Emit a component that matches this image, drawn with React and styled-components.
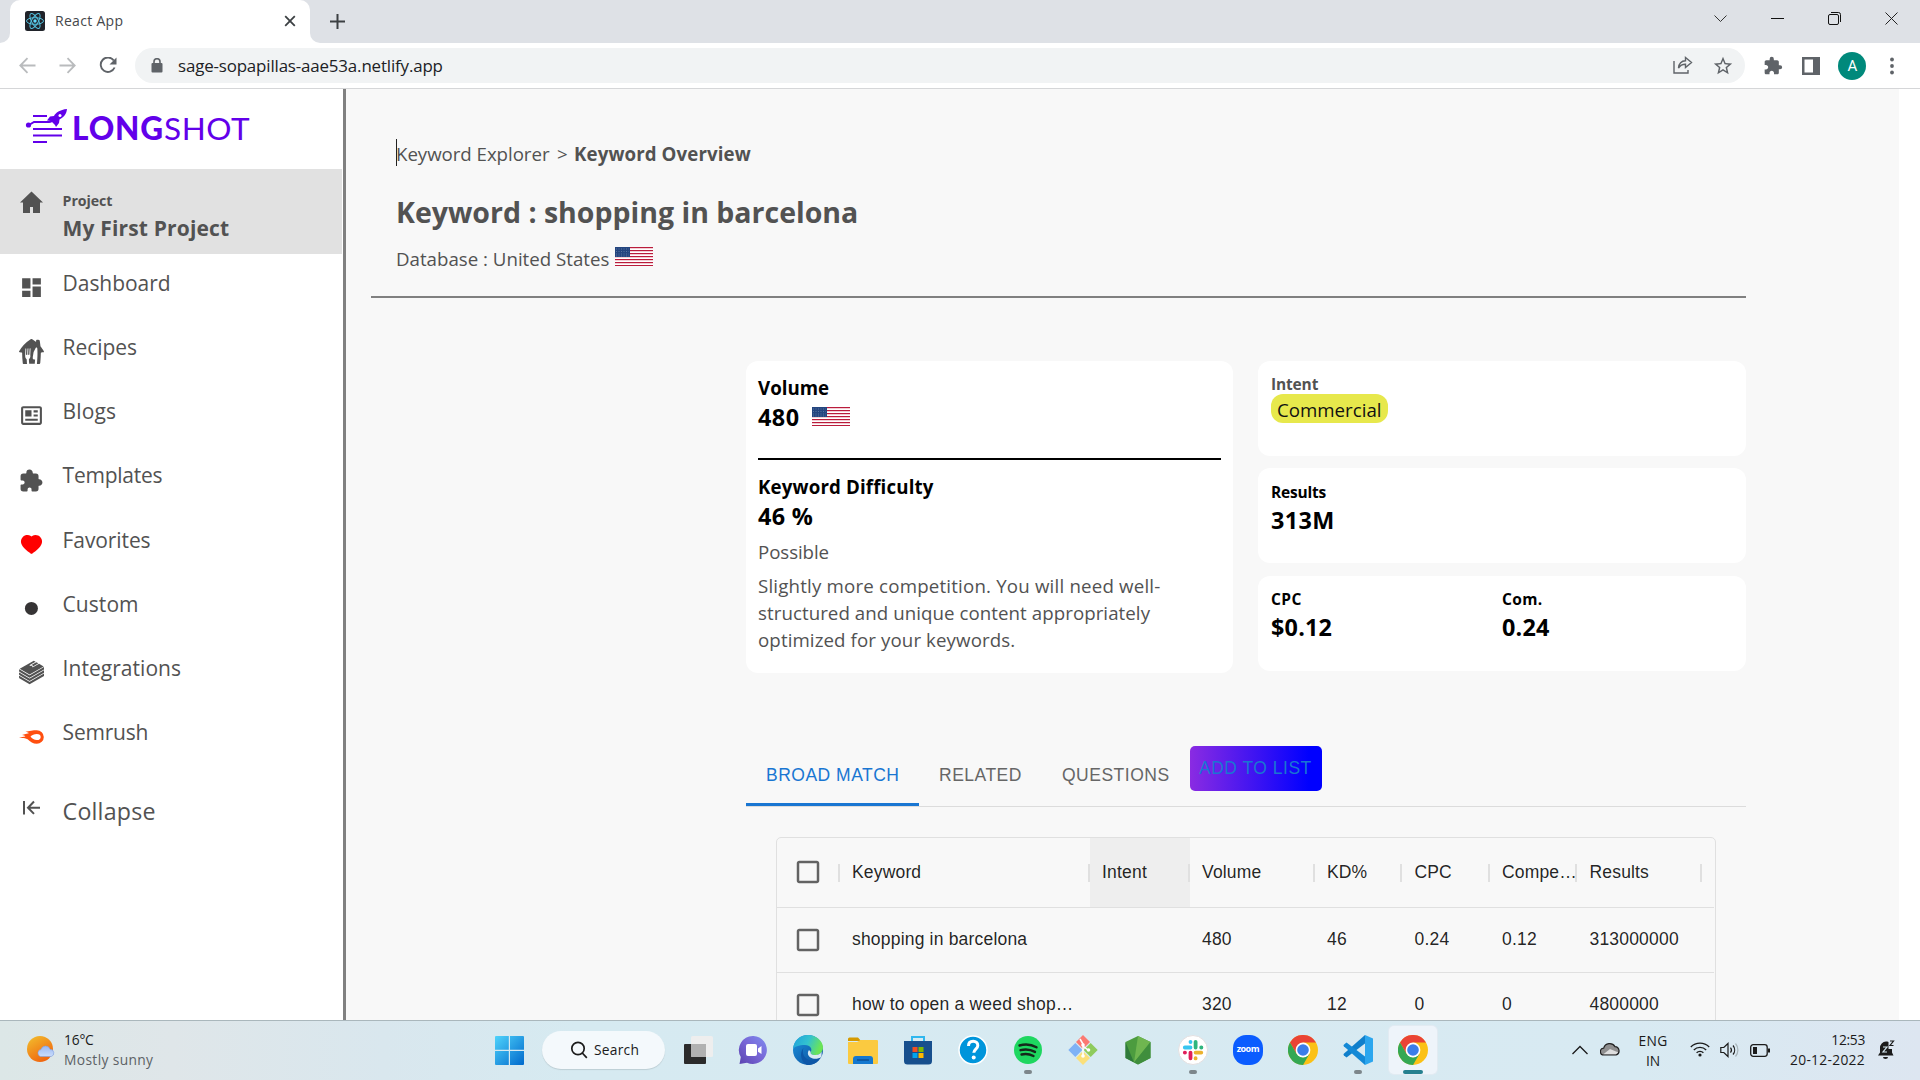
import React from 'react';
import styled, { createGlobalStyle } from 'styled-components';
import { MdDashboard, MdExtension, MdCheckBoxOutlineBlank, MdStarBorder } from 'react-icons/md';
import { BiNews } from 'react-icons/bi';
import { AiFillHeart } from 'react-icons/ai';
import { IoExtensionPuzzle } from 'react-icons/io5';
import { SiJusteat, SiBookstack } from 'react-icons/si';

const GlobalStyle = createGlobalStyle`
  * { box-sizing: border-box; }
  body { margin: 0; background: #fff; font-family: "Open Sans", "Noto Sans", sans-serif; }
  svg { display: block; flex: none; }
`;

const Text = styled.span`
  display: block;
  white-space: nowrap;
  letter-spacing: ${(p) => p.$track || 0}px;
`;

const Screen = styled.div`
  width: 1920px;
  height: 1080px;
  display: flex;
  flex-direction: column;
  overflow: hidden;
`;

/* browser frame */
const TabStrip = styled.header`
  height: 43px;
  flex: none;
  display: flex;
  background: #dee1e6;
`;
const TabLeftFoot = styled.div`
  width: 10px;
  background: #fff;
  &::after { content: ""; display: block; height: 43px; background: #dee1e6; border-bottom-right-radius: 10px; }
`;
const BrowserTab = styled.div`
  width: 300px;
  display: flex;
  align-items: center;
  padding: 0 14px 1px 15px;
  background: #fff;
  border-radius: 10px 10px 0 0;
`;
const TabTitle = styled(Text)`
  flex: 1;
  padding-left: 10px;
  font-size: 14px;
  line-height: 20px;
  color: #45484b;
`;
const TabRightFoot = styled.div`
  flex: 1;
  display: flex;
  background: #fff;
`;
const StripRest = styled.div`
  flex: 1;
  display: flex;
  align-items: center;
  background: #dee1e6;
  border-bottom-left-radius: 10px;
  padding-left: 20px;
`;
const WindowControls = styled.div`
  margin-left: auto;
  display: flex;
  gap: 44px;
  padding: 0 22px 6px 0;
  align-items: center;
`;
const Toolbar = styled.div`
  height: 46px;
  flex: none;
  display: flex;
  align-items: center;
  padding: 0 21px 0 19px;
  background: #fff;
  border-bottom: 1px solid #d5d6d8;
`;
const NavButtons = styled.div`
  display: flex;
  gap: 23px;
  width: 116px;
  flex: none;
`;
const Omnibox = styled.div`
  width: 1610px;
  flex: none;
  height: 35px;
  display: flex;
  align-items: center;
  border-radius: 18px;
  background: #f1f3f4;
  padding: 0 11px 0 16px;
`;
const Url = styled(Text)`
  flex: 1;
  padding: 0 0 0 15px;
  font-size: 16.9px;
  line-height: 24px;
  color: #202124;
`;
const OmniActions = styled.div`
  display: flex;
  gap: 19px;
`;
const ToolbarActions = styled.div`
  flex: 1;
  display: flex;
  align-items: center;
  justify-content: space-between;
  padding-left: 18px;
`;
const Avatar = styled.div`
  width: 28px;
  height: 28px;
  border-radius: 50%;
  background: #00897b;
  color: #fff;
  font: 15px/29px Roboto, sans-serif;
  text-align: center;
`;

/* page */
const Page = styled.div`
  height: 931px;
  flex: none;
  display: flex;
  overflow: hidden;
`;
const Sidebar = styled.aside`
  width: 346px;
  flex: none;
  background: #fff;
  border-right: 3px solid #808080;
  color: #525252;
`;
const Brand = styled.div`
  height: 80px;
  display: flex;
  padding: 20px 0 0 25px;
`;
const Wordmark = styled(Text)`
  font: 400 31.5px/32px Lato, sans-serif;
  color: #6200ea;
  padding: 3px 0 0 1px;
  b { font-weight: 900; letter-spacing: 0.9px; }
`;
const ProjectRow = styled.div`
  width: 342px;
  height: 85px;
  display: flex;
  background: #e1e1e1;
  padding: 20px 0 0 19px;
`;
const ProjectText = styled.div`
  padding: 1px 0 0 18.6px;
`;
const ProjectCaption = styled(Text)`
  font-size: 14.2px;
  line-height: 22px;
  font-weight: 700;
`;
const ProjectName = styled(Text)`
  font-size: 21px;
  line-height: 32px;
  font-weight: 700;
`;
const NavItem = styled.div`
  height: 64.15px;
  display: flex;
`;
const NavIcon = styled.div`
  width: 62.6px;
  flex: none;
  padding: ${(p) => p.$top || 21}px 0 0 19px;
  color: ${(p) => p.$color || '#525252'};
`;
const NavLabel = styled(Text)`
  padding-top: 14px;
  font-size: 21px;
  line-height: 30px;
`;
const CollapseItem = styled.div`
  display: flex;
  padding-top: 14px;
`;
const CollapseLabel = styled(Text)`
  padding-top: 14px;
  font-size: 23.2px;
  line-height: 32px;
`;

const Main = styled.main`
  width: 1553px;
  flex: none;
  background: #f8f8f8;
  padding: 51px 0 0 25px;
  color: #525252;
`;
const PageHeader = styled.div`
  width: 1375px;
  height: 158px;
  border-bottom: 2px solid #808080;
  padding-left: 25px;
`;
const Crumbs = styled.div`
  display: flex;
  position: relative;
`;
const Caret = styled.i`
  position: absolute;
  left: 0;
  top: -1px;
  width: 1px;
  height: 27px;
  background: #222;
`;
const Crumb = styled(Text)`
  font-size: 18.7px;
  line-height: 27px;
  font-weight: ${(p) => (p.$current ? 700 : 400)};
  width: ${(p) => p.$width}px;
`;
const Title = styled(Text)`
  margin-top: 25px;
  font-size: 28.5px;
  line-height: 40px;
  font-weight: 700;
`;
const DatabaseLine = styled.div`
  display: flex;
  margin-top: 13px;
`;
const DatabaseText = styled(Text)`
  width: 219px;
  font-size: 18.7px;
  line-height: 27px;
`;
const FlagBox = styled.div`
  padding-top: ${(p) => p.$top}px;
`;

const Body = styled.div`
  margin: 63px 0 0 375px;
  width: 1000px;
`;
const Cards = styled.div`
  display: grid;
  grid-template-columns: 487px 488px;
  column-gap: 25px;
  height: 385px;
  align-items: start;
`;
const DifficultyCard = styled.section`
  height: 312px;
  background: #fff;
  border-radius: 12px;
  padding: 13px 12px 0;
`;
const CardTitle = styled(Text)`
  font-size: 18.7px;
  line-height: 27px;
  font-weight: 700;
  color: #000;
`;
const Figure = styled(Text)`
  font-size: 23.4px;
  line-height: 32px;
  font-weight: 700;
  color: #000;
`;
const VolumeLine = styled.div`
  display: flex;
  height: 57px;
  gap: 12px;
`;
const Rule = styled.div`
  height: 2px;
  background: #000;
  margin-bottom: 13px;
`;
const Note = styled(Text)`
  font-size: 18.7px;
  line-height: 27px;
  margin-top: ${(p) => p.$top || 0}px;
`;
const SideCards = styled.div`
  display: grid;
  grid-template-rows: 95px 95px 95px;
  row-gap: 12.4px;
`;
const SmallCard = styled.section`
  background: #fff;
  border-radius: 12px;
  padding: ${(p) => p.$top}px 0 0 13px;
  display: grid;
  grid-template-columns: 231px 1fr;
`;
const SmallTitle = styled(Text)`
  font-size: 15.5px;
  line-height: ${(p) => (p.$muted ? 18 : 22)}px;
  padding-bottom: 1px;
  font-weight: 700;
  color: ${(p) => (p.$muted ? '#525252' : '#000')};
`;
const Pill = styled.div`
  width: 117px;
  height: 29px;
  border-radius: 12px;
  background: #e7e84c;
  padding-left: 6px;
`;
const PillText = styled(Text)`
  font-size: 18.7px;
  line-height: 31px;
  color: #111;
`;

const Tabs = styled.div`
  display: flex;
  height: 61px;
  border-bottom: 1px solid #dcdcdc;
  font-family: "Liberation Sans", Arial, sans-serif;
`;
const Tab = styled.div`
  width: ${(p) => p.$width}px;
  height: 60px;
  padding: 0 20px;
  color: ${(p) => (p.$active ? '#1976d2' : '#666')};
  border-bottom: ${(p) => (p.$active ? '3px solid #1976d2' : '0')};
`;
const TabLabel = styled(Text)`
  font-size: 17.5px;
  letter-spacing: 0.5px;
  line-height: ${(p) => p.$lh || 58}px;
`;
const AddButton = styled.div`
  width: 132px;
  height: 45px;
  border-radius: 5px;
  background: linear-gradient(to right, blueviolet, blue 90%);
  color: #1976d2;
  padding-left: 9px;
`;

const Table = styled.div`
  margin: 30px 0 0 30px;
  width: 940px;
  height: 240px;
  border: 1px solid #e0e0e0;
  border-radius: 5px;
  font: 17.5px/24px "Liberation Sans", Arial, sans-serif;
  color: rgba(0, 0, 0, 0.87);
`;
const Row = styled.div`
  display: grid;
  grid-template-columns: 62.5px 250px 100px 125px 87.5px 87.5px 87.5px 125px;
  width: 937px;
  height: ${(p) => (p.$head ? 70 : 65)}px;
  border-bottom: 1px solid #e0e0e0;
`;
const Cell = styled.div`
  display: flex;
  align-items: center;
  min-width: 0;
  padding: ${(p) => (p.$check ? '0 0 0 16px' : '0 0 0 12.5px')};
  background: ${(p) => (p.$shade ? '#eeeeee' : 'none')};
  color: ${(p) => (p.$check ? 'rgba(0,0,0,0.6)' : 'inherit')};
  svg { margin-bottom: ${(p) => (p.$head ? 2 : 0)}px; }
  &::after {
    content: "";
    display: ${(p) => (p.$head ? 'block' : 'none')};
    width: 2px;
    height: 18px;
    margin-left: auto;
    flex: none;
    background: #e0e0e0;
  }
`;
const CellText = styled(Text)`
  letter-spacing: 0.19px;
  padding-bottom: 2px;
`;
const HeadText = styled(CellText)`
  width: 0;
  flex: 1;
  overflow: visible;
  letter-spacing: ${(p) => p.$track}px;
`;

/* taskbar */
const Taskbar = styled.footer`
  height: 60px;
  flex: none;
  display: flex;
  border-top: 1px solid #aab7bc;
  background: linear-gradient(to right, #dce7e7, #dfe6e9 9%, #d9e7ee 20%, #d6eaf1 30%, #d8eaf2 85%, #dde6f1);
  color: #1b1b1b;
`;
const Weather = styled.div`
  width: 495px;
  display: flex;
  padding: 9px 0 0 27px;
  gap: 9px;
  svg { margin-top: 4px; }
`;
const TaskText = styled(Text)`
  font-size: 13.8px;
  line-height: 20px;
  color: ${(p) => p.$color || '#1b1b1b'};
`;
const StartButton = styled.div`
  padding-top: 15px;
  width: 47px;
`;
const SearchBox = styled.div`
  width: 123px;
  height: 38px;
  margin: 10px 5px 0 0;
  border-radius: 19px;
  background: #f4f9fc;
  box-shadow: 0 1px 1px rgba(0, 0, 0, 0.12);
  display: flex;
  align-items: center;
  padding-left: 28px;
  gap: 6px;
`;
const AppSlot = styled.div`
  width: 48px;
  height: 48px;
  margin: 5px 3.53px 0;
  border-radius: 5px;
  display: flex;
  flex-direction: column;
  align-items: center;
  padding-top: 9px;
  background: ${(p) => (p.$active ? '#eef4fa' : 'none')};
  box-shadow: ${(p) => (p.$active ? '0 0 0 1px #e2ebf2' : 'none')};
  &::after {
    content: "";
    display: ${(p) => (p.$dot ? 'block' : 'none')};
    width: ${(p) => p.$dot}px;
    height: 4px;
    border-radius: 2px;
    margin-top: 5px;
    background: ${(p) => (p.$active ? '#26808f' : '#7d868b')};
  }
`;
const Tray = styled.div`
  margin-left: auto;
  padding-right: 25px;
  display: flex;
`;
const TrayIcon = styled.div`
  width: ${(p) => p.$width}px;
  padding: ${(p) => p.$top}px 0 0 ${(p) => p.$left || 0}px;
`;
const TrayStack = styled.div`
  width: ${(p) => p.$width}px;
  padding: ${(p) => p.$top}px ${(p) => p.$right || 0}px 0 0;
  display: flex;
  flex-direction: column;
  align-items: ${(p) => p.$align};
`;

const Flag = () => (
  <svg width="38" height="19" viewBox="0 0 38 19">
    <rect width="38" height="19" fill="#fff" />
    {[0, 3, 6, 9, 12, 15, 18].map((y) => (
      <rect key={y} y={y} width="38" height="1" fill="#b91c3c" />
    ))}
    {[1, 4, 7, 10, 13, 16].map((y) => (
      <rect key={y} y={y} width="38" height="1" fill="#f3ccd3" />
    ))}
    <rect width="15" height="10" fill="#24457f" />
    <path d="M1 2h13M1 4.500h13M1 7h13M1 9h13" stroke="#6f8ab0" strokeWidth=".7" strokeDasharray="1 1.500" />
  </svg>
);

const ReactLogo = () => (
  <svg width="20" height="20" viewBox="0 0 20 20">
    <rect width="20" height="20" rx="2.500" fill="#20232a" />
    <g fill="none" stroke="#53c1de" strokeWidth="1">
      <ellipse cx="10" cy="10" rx="8.500" ry="3.300" />
      <ellipse cx="10" cy="10" rx="8.500" ry="3.300" transform="rotate(60 10 10)" />
      <ellipse cx="10" cy="10" rx="8.500" ry="3.300" transform="rotate(120 10 10)" />
    </g>
    <circle cx="10" cy="10" r="1.700" fill="#61dafb" />
  </svg>
);

const Rocket = () => (
  <svg width="46" height="36" viewBox="0 0 46 36" fill="none" stroke="#6200ea" strokeWidth="2">
    <path d="M8 7h14M8 20h29M8 26.500h29M8 33h14M4 16l5-3h15c2.500 0 4-1.500 5.500-3.500" />
    <circle cx="3.500" cy="16" r="2.600" fill="#6200ea" stroke="none" />
    <path d="M42 0c-7 .5-11.500 4-13 7l-4 .5-3 4 4 .5 4 4 1 2 3-4 .5-3.500C37.500 9 41.500 6 42 0z" fill="#6200ea" stroke="none" />
    <circle cx="35" cy="6.500" r="1.500" fill="#fff" stroke="none" />
  </svg>
);

const HomeIcon = () => (
  <svg width="25" height="25" viewBox="0 0 25 25">
    <path d="M12.500 2.500L24 13.500h-3V24h-7v-6h-3v6H4V13.500H1z" fill="#525252" />
  </svg>
);
const DotIcon = () => (
  <svg width="25" height="25" viewBox="0 0 25 25">
    <circle cx="12.400" cy="12.400" r="6.500" fill="#363435" />
  </svg>
);
const CometIcon = () => (
  <svg width="25" height="25" viewBox="0 0 25 25">
    <path
      d="M17.800 6.200c-3.600 0-7.600.7-11.400 1.500 2 .3 3.200.9 3.400 1.600-2 .7-4.300 1-6.800 1.700 1.800.2 3 .7 3.400 1.400C4.500 12.700 2.300 12.700 0 14.100c3.400-.4 6.200-.2 8.600 1.200 2.700 2.500 5.500 4.500 9.200 4.500a7 6.800 0 0 0 0-13.600zM11.500 12.600c1.500-1.700 3.700-2.700 6.300-2.700a3.900 3.100 0 0 1 0 6.200c-2.500 0-4.800-1.200-6.300-3.500z"
      fill="#ff4f10"
      fillRule="evenodd"
    />
  </svg>
);
const CollapseIcon = () => (
  <svg width="25" height="25" viewBox="0 0 25 25" fill="none" stroke="#525252" strokeWidth="2">
    <path d="M5 5v13.500M21 11.700H10M15 5.500l-6 6.200 6 6.200" />
  </svg>
);

const SunCloud = () => (
  <svg width="28" height="28" viewBox="0 0 28 28">
    <defs>
      <linearGradient id="sun" x1="0" y1="0" x2=".6" y2="1">
        <stop offset="0" stopColor="#f2c12e" />
        <stop offset="1" stopColor="#f0650f" />
      </linearGradient>
      <linearGradient id="cloud" x1="0" y1="0" x2="0" y2="1">
        <stop offset="0" stopColor="#9bb8f2" />
        <stop offset="1" stopColor="#c9dcfb" />
      </linearGradient>
    </defs>
    <circle cx="13" cy="15" r="13" fill="url(#sun)" />
    <path d="M13.500 22.500a3.600 3.600 0 0 1 .5-7 4.700 4.700 0 0 1 9-.2 3.700 3.700 0 0 1 1.300 7.200z" fill="url(#cloud)" stroke="#7f9fe0" strokeWidth=".6" />
  </svg>
);
const WindowsLogo = () => (
  <svg width="29" height="29" viewBox="0 0 29 29">
    <defs>
      <linearGradient id="win" x1="0" y1="0" x2="1" y2="1">
        <stop offset="0" stopColor="#4fd3fb" />
        <stop offset="1" stopColor="#0069cc" />
      </linearGradient>
    </defs>
    <path d="M0 1a1 1 0 0 1 1-1h12.800v13.800H0zM15 0h13a1 1 0 0 1 1 1v12.800H15zM0 15h13.800v14H1a1 1 0 0 1-1-1zM15 15h14v13a1 1 0 0 1-1 1H15z" fill="url(#win)" />
  </svg>
);
const SearchGlass = () => (
  <svg width="18" height="18" viewBox="0 0 18 18" fill="none" stroke="#1b1b1b" strokeWidth="1.700">
    <circle cx="8" cy="7.500" r="6.200" />
    <path d="M12.300 12l4.500 4.800" />
  </svg>
);

const TaskView = () => (
  <svg width="30" height="30" viewBox="0 0 30 30">
    <rect x="1" y="9" width="22" height="20" rx="1" fill="#2b2b2b" />
    <rect x="8" y="1" width="22" height="21" rx="1.500" fill="#eeeeee" />
    <path d="M8 9h15v13H9.500a1.500 1.500 0 0 1-1.500-1.500z" fill="#b1b1b1" />
  </svg>
);
const Chat = () => (
  <svg width="30" height="30" viewBox="0 0 30 30">
    <defs>
      <linearGradient id="chat" x1="0" y1="1" x2="1" y2="0">
        <stop offset="0" stopColor="#5b43b0" />
        <stop offset=".5" stopColor="#7866d6" />
        <stop offset="1" stopColor="#7f8df0" />
      </linearGradient>
    </defs>
    <path d="M15.500 1A14 14 0 1 1 9 27.700L1.500 29l1.300-7A14 14 0 0 1 15.500 1z" fill="url(#chat)" />
    <rect x="8" y="9" width="11" height="12" rx="2" fill="#fff" />
    <path d="M20 13.500l3.500-2.500v8L20 16.700z" fill="#fff" />
  </svg>
);
const Edge = () => (
  <svg width="30" height="30" viewBox="0 0 30 30">
    <defs>
      <linearGradient id="edgeA" x1="0" y1="0" x2="1" y2=".3">
        <stop offset="0" stopColor="#1ea0dc" />
        <stop offset=".55" stopColor="#33c2cf" />
        <stop offset="1" stopColor="#6be556" />
      </linearGradient>
      <linearGradient id="edgeB" x1="0" y1="0" x2="1" y2="1">
        <stop offset="0" stopColor="#1b93dd" />
        <stop offset="1" stopColor="#0c4a99" />
      </linearGradient>
    </defs>
    <circle cx="15" cy="15" r="15" fill="url(#edgeB)" />
    <path d="M0 14C1 5 7 0 15 0s15 6 15 12.500c0 5-4 7.500-7.500 7.500-4 0-5.500-1.500-4.700-3 1.700-3-.3-7-5.800-7C6 10 1 12 0 14z" fill="url(#edgeA)" />
    <path d="M17.800 17c-.8 1.500.7 3 4.700 3 2.500 0 4.800-1 6.200-3.200L28.500 22c-3 2-8 2.500-11 .5-3-2-3.300-5-1.500-7.500z" fill="#d9eaf2" />
    <path d="M10.500 13C8 20 13 28 26 25c-3 4-8 5.500-12 4.900C8 27 6 18 10.500 13z" fill="#0d57a7" />
  </svg>
);
const Folder = () => (
  <svg width="30" height="30" viewBox="0 0 30 30">
    <path d="M0 4a1.500 1.500 0 0 1 1.500-1.500H10l3 3.500H0z" fill="#d59a00" />
    <path d="M0 7h9l3.500-2H29a1 1 0 0 1 1 1v22a1 1 0 0 1-1 1H1a1 1 0 0 1-1-1z" fill="#fbca40" />
    <path d="M5 29v-5a3 3 0 0 1 3-3h14a3 3 0 0 1 3 3v5z" fill="#1478cf" />
    <path d="M9 25h12" stroke="#0b4f94" strokeWidth="1.500" />
  </svg>
);
const Store = () => (
  <svg width="30" height="30" viewBox="0 0 30 30">
    <path d="M9 6V2h12v4" fill="none" stroke="#2fb7ee" strokeWidth="2" />
    <path d="M1 6h28v20a3.500 3.500 0 0 1-3.500 3.500h-21A3.500 3.500 0 0 1 1 26z" fill="#174f8d" />
    <path d="M9.500 12h5v5h-5z" fill="#f25022" />
    <path d="M15.500 12h5v5h-5z" fill="#7fba00" />
    <path d="M9.500 18h5v5h-5z" fill="#00a4ef" />
    <path d="M15.500 18h5v5h-5z" fill="#ffb900" />
  </svg>
);
const Help = () => (
  <svg width="30" height="30" viewBox="0 0 30 30">
    <circle cx="15" cy="15" r="14" fill="#0095db" stroke="#fff" strokeWidth="1.500" />
    <path d="M10.500 11c0-3 2-4.700 4.700-4.700s4.600 1.700 4.600 4.200c0 3.500-4 3.700-4 7.300" fill="none" stroke="#fff" strokeWidth="3" />
    <circle cx="15.700" cy="22.500" r="2" fill="#fff" />
  </svg>
);
const Spotify = () => (
  <svg width="30" height="30" viewBox="0 0 30 30">
    <circle cx="15" cy="15" r="14" fill="#1ed760" />
    <path d="M6.500 10.500c6-1.700 12-1 17 1.800M7.500 15.200c5-1.400 10-.8 14.500 1.700M8.500 19.500c4-1 8-.6 12 1.500" fill="none" stroke="#15281b" strokeWidth="2.400" strokeLinecap="round" />
  </svg>
);
const GitIcon = () => (
  <svg width="30" height="30" viewBox="0 0 30 30">
    <path d="M15 0l7 7-7 7-7-7z" fill="#fb7a72" />
    <path d="M7.300 8l7 7-7 7-7-7z" fill="#7fb2f5" />
    <path d="M22.700 8l7 7-7 7-7-7z" fill="#8ecb5c" />
    <path d="M15 16l7 7-7 7-7-7z" fill="#fbe07a" />
    <path d="M12 4l3 5v12M15 11l5 4" stroke="#fff" strokeWidth="1.500" fill="none" />
    <circle cx="15" cy="10" r="1.800" fill="#fff" /><circle cx="20.500" cy="15" r="1.800" fill="#fff" /><circle cx="15" cy="21" r="1.800" fill="#fff" />
  </svg>
);
const Hexagon = () => (
  <svg width="30" height="30" viewBox="0 0 30 30">
    <path d="M15 1l12.500 6v16L15 29.500 2.500 23V7z" fill="#4c9c3f" />
    <path d="M15 1l12.500 6L11 27.500z" fill="#6fb650" />
    <path d="M2.500 7L11 27.500 2.500 23z" fill="#2f7a3a" />
    <path d="M27.500 7v16L15 29.500l-4-2z" fill="#3f8e3d" />
  </svg>
);
const Slack = () => (
  <svg width="30" height="30" viewBox="0 0 30 30">
    <circle cx="15" cy="15" r="14.500" fill="#fff" stroke="#e3dfe0" />
    <g strokeWidth="3.800" strokeLinecap="round">
      <path d="M12.500 6.800v.2M6.800 12.500h5.700" stroke="#36c5f0" />
      <path d="M17.600 6.800v5.700M23.200 12.500h.2" stroke="#2eb67d" />
      <path d="M17.600 23.200v.2M17.600 17.600h5.700" stroke="#ecb22e" />
      <path d="M12.500 17.600v5.700M6.800 17.600h.2" stroke="#e01e5a" />
    </g>
  </svg>
);
const ZoomLabel = styled.div`
  width: 30px;
  height: 30px;
  flex: none;
  border-radius: 13px;
  background: #0b5cff;
  color: #fff;
  font: 700 9px/28px "Open Sans", sans-serif;
  letter-spacing: -0.5px;
  text-align: center;
`;
const Chrome = () => (
  <svg width="30" height="30" viewBox="0 0 30 30">
    <circle cx="15" cy="15" r="15" fill="#fbc116" />
    <path d="M2 7.500A15 15 0 0 1 28 7.500H15L8.500 18.750z" fill="#ea4335" />
    <path d="M2 7.500A15 15 0 0 0 15 30l6.500-11.250L15 22.500l-6.500-3.750z" fill="#34a853" />
    <circle cx="15" cy="15" r="7.400" fill="#fff" />
    <circle cx="15" cy="15" r="5.800" fill="#3b7de9" />
  </svg>
);
const VsCode = () => (
  <svg width="30" height="30" viewBox="0 0 30 30">
    <path d="M22 8.500L3.500 22.500.8 20.300c-.5-.5-.5-1 0-1.500L22 0z" fill="#0f7fcb" />
    <path d="M22 21.500L3.500 7.500.8 9.700c-.5.500-.5 1 0 1.500L22 30z" fill="#1489d6" />
    <path d="M22 0l8 3.500v23L22 30z" fill="#2ba6ee" />
  </svg>
);

const navItems = [
  { label: 'Dashboard', icon: <MdDashboard size={25} />, track: -0.05 },
  { label: 'Recipes', icon: <SiJusteat size={25} />, track: -0.05 },
  { label: 'Blogs', icon: <BiNews size={25} />, track: 0.1 },
  { label: 'Templates', icon: <IoExtensionPuzzle size={25} />, top: 22, track: -0.25 },
  { label: 'Favorites', icon: <AiFillHeart size={25} />, color: '#ff0000', track: -0.1 },
  { label: 'Custom', icon: <DotIcon />, track: 0.05 },
  { label: 'Integrations', icon: <SiBookstack size={25} />, track: 0.04 },
  { label: 'Semrush', icon: <CometIcon />, track: -0.2 },
];

const columns = [
  ['Keyword', 0.17], ['Intent', 0.2], ['Volume', 0.17], ['KD%', 0.1],
  ['CPC', 0.15], ['Compe…', 0.15], ['Results', 0.17],
];
const rows = [
  ['shopping in barcelona', '', '480', '46', '0.24', '0.12', '313000000'],
  ['how to open a weed shop…', '', '320', '12', '0', '0', '4800000'],
];

const apps = [
  { icon: <TaskView /> }, { icon: <Chat /> }, { icon: <Edge /> }, { icon: <Folder /> },
  { icon: <Store /> }, { icon: <Help /> }, { icon: <Spotify />, dot: 8 }, { icon: <GitIcon /> },
  { icon: <Hexagon /> }, { icon: <Slack />, dot: 8 }, { icon: <ZoomLabel>zoom</ZoomLabel> }, { icon: <Chrome /> },
  { icon: <VsCode />, dot: 8 }, { icon: <Chrome />, dot: 20, active: true },
];

export default function App() {
  return (
    <Screen>
      <GlobalStyle />
      <TabStrip>
        <TabLeftFoot />
        <BrowserTab>
          <ReactLogo />
          <TabTitle $track={0.3}>React App</TabTitle>
          <svg width="12" height="12" viewBox="0 0 12 12" stroke="#3c4043" strokeWidth="1.800"><path d="M1.200 1.200l9.600 9.600M10.800 1.200L1.200 10.800" /></svg>
        </BrowserTab>
        <TabRightFoot>
          <StripRest>
            <svg width="15" height="15" viewBox="0 0 15 15" stroke="#3c4043" strokeWidth="2"><path d="M7.500 0v15M0 7.500h15" /></svg>
            <WindowControls>
              <svg width="13" height="13" viewBox="0 0 13 13" fill="none" stroke="#333"><path d="M.5 3.500l6 6 6-6" /></svg>
              <svg width="13" height="13" viewBox="0 0 13 13" stroke="#111"><path d="M0 6.500h13" /></svg>
              <svg width="13" height="13" viewBox="0 0 13 13" fill="none" stroke="#111"><rect x=".5" y="2.500" width="10" height="10" rx="1.500" /><path d="M3 .5h7.500a2 2 0 0 1 2 2V10" /></svg>
              <svg width="13" height="13" viewBox="0 0 13 13" stroke="#222"><path d="M.5.500l12 12M12.500.500l-12 12" /></svg>
            </WindowControls>
          </StripRest>
        </TabRightFoot>
      </TabStrip>
      <Toolbar>
        <NavButtons>
          <svg width="17" height="17" viewBox="0 0 17 17" fill="none" stroke="#b9bbbd" strokeWidth="1.800"><path d="M16.500 8.500H1.500M8.500 1.200L1.300 8.500l7.200 7.300" /></svg>
          <svg width="17" height="17" viewBox="0 0 17 17" fill="none" stroke="#b9bbbd" strokeWidth="1.800"><path d="M.5 8.500h15M8.500 1.200l7.200 7.300-7.200 7.300" /></svg>
          <svg width="18" height="17" viewBox="0 0 18 17" fill="none" stroke="#5f6368" strokeWidth="1.900"><path d="M14.800 3.500A7.200 7.200 0 1 0 15.600 10.500" /><path d="M17.500.5v7h-7z" fill="#5f6368" stroke="none" /></svg>
        </NavButtons>
        <Omnibox>
          <svg width="12" height="15" viewBox="0 0 12 15"><rect x=".5" y="5" width="11" height="9.500" rx="1" fill="#5f6368" /><path d="M3 6V3.700a3 3 0 0 1 6 0V6" fill="none" stroke="#5f6368" strokeWidth="1.600" /></svg>
          <Url $track={-0.15}>sage-sopapillas-aae53a.netlify.app</Url>
          <OmniActions>
            <svg width="20" height="20" viewBox="0 0 20 20" fill="none" stroke="#5f6368" strokeWidth="1.400"><path d="M1 6v12h14v-3" /><path d="M5.500 13c.5-4.500 3-7 7-7.200V2.500l6 5-6 5V9.300c-3-.1-5.300 1.200-7 3.700z" /></svg>
            <MdStarBorder size={22} color="#5f6368" />
          </OmniActions>
        </Omnibox>
        <ToolbarActions>
          <MdExtension size={20} color="#5f6368" />
          <svg width="18" height="18" viewBox="0 0 18 18"><path d="M0 0h18v18H0zM2.500 2.500v13H11v-13z" fill="#5f6368" fillRule="evenodd" /></svg>
          <Avatar>A</Avatar>
          <svg width="14" height="18" viewBox="0 0 14 18" fill="#5f6368"><circle cx="7" cy="2.500" r="1.900" /><circle cx="7" cy="9" r="1.900" /><circle cx="7" cy="15.500" r="1.900" /></svg>
        </ToolbarActions>
      </Toolbar>

      <Page>
        <Sidebar>
          <Brand>
            <Rocket />
            <Wordmark $track={0.55}><b>LONG</b>SHOT</Wordmark>
          </Brand>
          <ProjectRow>
            <HomeIcon />
            <ProjectText>
              <ProjectCaption $track={-0.1}>Project</ProjectCaption>
              <ProjectName $track={0.16}>My First Project</ProjectName>
            </ProjectText>
          </ProjectRow>
          {navItems.map((n) => (
            <NavItem key={n.label}>
              <NavIcon $color={n.color} $top={n.top}>{n.icon}</NavIcon>
              <NavLabel $track={n.track}>{n.label}</NavLabel>
            </NavItem>
          ))}
          <CollapseItem>
            <NavIcon $top={15}><CollapseIcon /></NavIcon>
            <CollapseLabel $track={0.2}>Collapse</CollapseLabel>
          </CollapseItem>
        </Sidebar>

        <Main>
          <PageHeader>
            <Crumbs>
              <Caret />
              <Crumb $width={161} $track={-0.05}>Keyword Explorer</Crumb>
              <Crumb $width={17}>&gt;</Crumb>
              <Crumb $current $track={0.1}>Keyword Overview</Crumb>
            </Crumbs>
            <Title>Keyword : shopping in barcelona</Title>
            <DatabaseLine>
              <DatabaseText>Database : United States</DatabaseText>
              <FlagBox $top={2}><Flag /></FlagBox>
            </DatabaseLine>
          </PageHeader>

          <Body>
            <Cards>
              <DifficultyCard>
                <CardTitle>Volume</CardTitle>
                <VolumeLine>
                  <Figure $track={0.5}>480</Figure>
                  <FlagBox $top={6}><Flag /></FlagBox>
                </VolumeLine>
                <Rule />
                <CardTitle $track={0.15}>Keyword Difficulty</CardTitle>
                <Figure $track={0.3}>46 %</Figure>
                <Note $top={6} $track={-0.08}>Possible</Note>
                <Note $top={7} $track={0.19}>Slightly more competition. You will need well-</Note>
                <Note $track={0.06}>structured and unique content appropriately</Note>
                <Note $track={0.1}>optimized for your keywords.</Note>
              </DifficultyCard>
              <SideCards>
                <SmallCard $top={14}>
                  <div>
                    <SmallTitle $muted $track={-0.15}>Intent</SmallTitle>
                    <Pill><PillText>Commercial</PillText></Pill>
                  </div>
                </SmallCard>
                <SmallCard $top={13}>
                  <div>
                    <SmallTitle $track={-0.2}>Results</SmallTitle>
                    <Figure $track={0.4}>313M</Figure>
                  </div>
                </SmallCard>
                <SmallCard $top={12}>
                  <div>
                    <SmallTitle $track={0.45}>CPC</SmallTitle>
                    <Figure $track={0.2}>$0.12</Figure>
                  </div>
                  <div>
                    <SmallTitle $track={0.35}>Com.</SmallTitle>
                    <Figure $track={0.2}>0.24</Figure>
                  </div>
                </SmallCard>
              </SideCards>
            </Cards>

            <Tabs>
              <Tab $active $width={173}><TabLabel>BROAD MATCH</TabLabel></Tab>
              <Tab $width={123}><TabLabel>RELATED</TabLabel></Tab>
              <Tab $width={148}><TabLabel>QUESTIONS</TabLabel></Tab>
              <AddButton><TabLabel $lh={45}>ADD TO LIST</TabLabel></AddButton>
            </Tabs>

            <Table>
              <Row $head>
                <Cell $head $check><MdCheckBoxOutlineBlank size={30} /></Cell>
                {columns.map(([name, track]) => (
                  <Cell key={name} $head $shade={name === 'Intent'}><HeadText $track={track}>{name}</HeadText></Cell>
                ))}
              </Row>
              {rows.map((r) => (
                <Row key={r[0]}>
                  <Cell $check><MdCheckBoxOutlineBlank size={30} /></Cell>
                  {r.map((v, i) => (
                    <Cell key={i}><CellText>{v}</CellText></Cell>
                  ))}
                </Row>
              ))}
            </Table>
          </Body>
        </Main>
      </Page>

      <Taskbar>
        <Weather>
          <SunCloud />
          <div>
            <TaskText $track={-0.2}>16°C</TaskText>
            <TaskText $color="#5c6265" $track={0.36}>Mostly sunny</TaskText>
          </div>
        </Weather>
        <StartButton><WindowsLogo /></StartButton>
        <SearchBox><SearchGlass /><TaskText $track={0.25}>Search</TaskText></SearchBox>
        {apps.map((a, i) => (
          <AppSlot key={i} $dot={a.dot} $active={a.active}>{a.icon}</AppSlot>
        ))}
        <Tray>
          <TrayIcon $width={28} $top={24}>
            <svg width="16" height="10" viewBox="0 0 16 10" fill="none" stroke="#1b1b1b" strokeWidth="1.300"><path d="M.5 9L8 1.500 15.500 9" /></svg>
          </TrayIcon>
          <TrayIcon $width={33} $top={20}>
            <svg width="20" height="15" viewBox="0 0 20 15"><path d="M4 14a3.400 3.400 0 0 1-.3-6.800A6.200 6.200 0 0 1 15 5.600 4.300 4.300 0 0 1 16 14z" fill="#8f8f8f" /><path d="M3 13.500l7-5.500 8.500 3.500-2.500 2z" fill="#dedede" /><path d="M4 14a3.400 3.400 0 0 1-.3-6.800A6.200 6.200 0 0 1 15 5.600 4.300 4.300 0 0 1 16 14z" fill="none" stroke="#222" strokeWidth="1.200" /></svg>
          </TrayIcon>
          <TrayStack $width={57} $top={10} $right={17} $align="center">
            <TaskText $track={0.3}>ENG</TaskText>
            <TaskText>IN</TaskText>
          </TrayStack>
          <TrayIcon $width={30} $top={20}>
            <svg width="20" height="16" viewBox="0 0 20 16" fill="none" stroke="#1b1b1b" strokeWidth="1.300"><path d="M.8 6a13 13 0 0 1 18.400 0M3.800 9a8.800 8.800 0 0 1 12.400 0M6.600 11.700a4.800 4.800 0 0 1 6.800 0" /><circle cx="10" cy="14" r="1.600" fill="#1b1b1b" stroke="none" /></svg>
          </TrayIcon>
          <TrayIcon $width={30} $top={21}>
            <svg width="20" height="16" viewBox="0 0 20 16" fill="none" stroke="#1b1b1b" strokeWidth="1.200"><path d="M.8 5.500h3L8 1.500v13l-4.200-4h-3z" /><path d="M10.500 5.500a4 4 0 0 1 0 5M13 3.500a7 7 0 0 1 0 9" /><path d="M15.500 1.500a10 10 0 0 1 0 13" stroke="#a9b5ba" /></svg>
          </TrayIcon>
          <TrayIcon $width={40} $top={23}>
            <svg width="20" height="13" viewBox="0 0 20 13"><rect x=".7" y=".7" width="16.500" height="11.600" rx="2.500" fill="none" stroke="#1b1b1b" strokeWidth="1.300" /><rect x="3" y="3" width="4" height="7" fill="#1b1b1b" /><path d="M18 4.500h2v4h-2z" fill="#1b1b1b" /></svg>
          </TrayIcon>
          <TrayStack $width={75} $top={9} $align="flex-end">
            <TaskText $track={-0.3}>12:53</TaskText>
            <TaskText $track={0.3}>20-12-2022</TaskText>
          </TrayStack>
          <TrayIcon $width={30} $top={19} $left={12}>
            <svg width="18" height="20" viewBox="0 0 18 20"><path d="M1 15.500l2-3V8a6.500 6.500 0 0 1 6-6.500c2 0 2.500.5 2.500.500V9h3.500v3.500l1.500 3zM6 17h5a2.500 2 0 0 1-5 0z" fill="#1b1b1b" /><path d="M13 1h3.500L13 5.500h3.500" fill="none" stroke="#1b1b1b" strokeWidth="1.200" /><path d="M6 7h4l-4 5h4" fill="none" stroke="#d8eaf2" strokeWidth="1.200" /></svg>
          </TrayIcon>
        </Tray>
      </Taskbar>
    </Screen>
  );
}
